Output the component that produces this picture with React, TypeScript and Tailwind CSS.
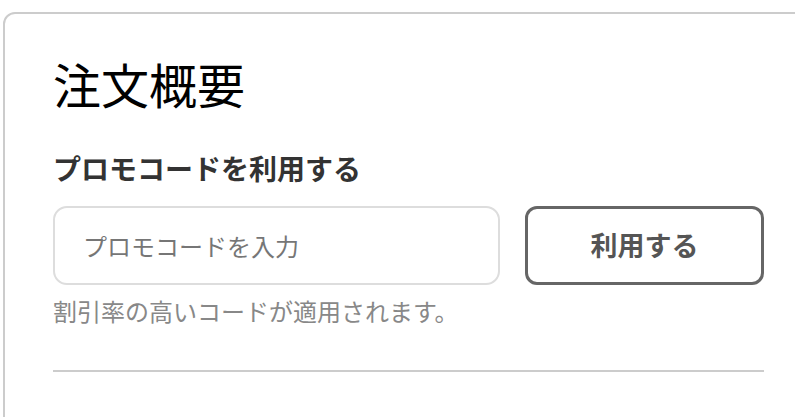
export default function App() {
  return (
    <div className="w-[795px] h-[417px] overflow-hidden bg-white" style={{ fontFamily: '"Noto Sans CJK JP", "Noto Sans", sans-serif' }}>
      <div className="ml-[3px] mt-[12px] w-[840px] h-[500px] border-2 border-[#cccccc] rounded-[12px] pl-[48px] pt-[45px]">
        <div className="w-[711px]">
          <h1 className="text-[48px] leading-none text-black font-normal">注文概要</h1>
          <div className="mt-[47px] text-[28px] leading-none font-bold text-[#333333]">プロモコードを利用する</div>
          <div className="mt-[24px] flex gap-[25px]">
            <div className="w-[447px] h-[79px] border-2 border-[#dddddd] rounded-[14px] flex items-center pl-[28px]">
              <span className="text-[24px] text-[#767676]">プロモコードを入力</span>
            </div>
            <button className="w-[239px] h-[79px] border-[3px] border-[#666666] rounded-[12px] text-[27px] font-bold text-[#555555] flex items-center justify-center">利用する</button>
          </div>
          <div className="mt-[14px] text-[24px] leading-none text-[#888888]">割引率の高いコードが適用されます。</div>
          <div className="mt-[47px] h-[2px] bg-[#cccccc]"></div>
        </div>
      </div>
    </div>
  );
}
